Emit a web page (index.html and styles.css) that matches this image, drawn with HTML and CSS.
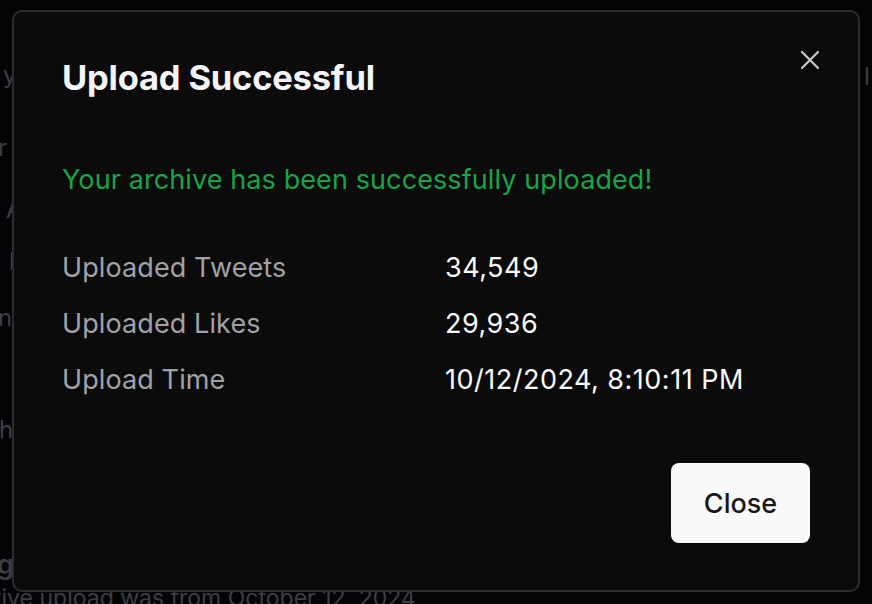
FILE: index.html
```html
<!DOCTYPE html>
<html lang="en">
<head>
<meta charset="utf-8">
<title>Upload Successful</title>
<link rel="stylesheet" href="styles.css">
</head>
<body>
<div class="page">
  <p class="bg-line l1">your archive is ready</p>
  <p class="bg-line l2">r data is stored safely</p>
  <p class="bg-line l3">Archive details</p>
  <p class="bg-line l4">l tweets and likes</p>
  <p class="bg-line l5">nd more information</p>
  <p class="bg-line l6">hosted by the community</p>
  <p class="bg-line l7 strong">g upload history</p>
  <p class="bg-line l8">tive upload was from October 12, 2024</p>
  <span class="bg-right">l</span>
</div>

<div class="overlay">
  <div class="dialog" role="dialog" aria-labelledby="dlg-title">
    <button class="dialog-x" aria-label="Close">
      <svg width="20" height="20" viewBox="0 0 20 20" fill="none" stroke="currentColor" stroke-width="2.2" stroke-linecap="round"><path d="M2 2 L18 18 M18 2 L2 18"/></svg>
    </button>
    <h2 id="dlg-title" class="dialog-title">Upload Successful</h2>
    <p class="dialog-success">Your archive has been successfully uploaded!</p>
    <dl class="stats">
      <dt>Uploaded Tweets</dt><dd>34,549</dd>
      <dt>Uploaded Likes</dt><dd>29,936</dd>
      <dt>Upload Time</dt><dd>10/12/2024, 8:10:11 PM</dd>
    </dl>
    <div class="dialog-footer">
      <button class="btn-close">Close</button>
    </div>
  </div>
</div>
</body>
</html>
```

FILE: styles.css
```css
* { box-sizing: border-box; }
html, body { margin: 0; padding: 0; }
body {
  width: 872px;
  height: 604px;
  overflow: hidden;
  background: #040407;
  font-family: Inter, "Noto Sans", sans-serif;
  position: relative;
}
.page {
  padding-top: 60px;
  display: flex;
  flex-direction: column;
}
.bg-line {
  margin: 0;
  font-size: 24px;
  line-height: 30px;
  color: #3e3e44;
  white-space: nowrap;
}
.l1 { margin-left: 3px; }
.l2 { margin-top: 43px; margin-left: -2px; }
.l3 { margin-top: 32px; margin-left: 6px; }
.l4 { margin-top: 22px; margin-left: 9px; }
.l5 { margin-top: 26px; margin-left: -2px; }
.l6 { margin-top: 82px; margin-left: -1px; }
.l7 { margin-top: 105px; margin-left: -3px; font-size: 27px; }
.l8 { margin-top: 3px; margin-left: -6px; font-size: 23px; }
.strong { font-weight: 600; }
.bg-right {
  position: absolute;
  left: 864px;
  top: 62px;
  font-size: 24px;
  color: #3e3e44;
}
.overlay {
  position: absolute;
  inset: 0;
  padding: 10px 12px 12px 12px;
}
.dialog {
  position: relative;
  width: 848px;
  height: 582px;
  background: #0b0b0b;
  border: 2px solid #2b2b30;
  border-radius: 10px;
  padding: 42px 48px 47px 48px;
  display: flex;
  flex-direction: column;
  color: #fafafa;
}
.dialog-x {
  position: absolute;
  top: 38px;
  right: 38px;
  width: 20px;
  height: 20px;
  padding: 0;
  background: none;
  border: 0;
  color: #c9c9cc;
  display: flex;
}
.dialog-title {
  margin: 0;
  font-size: 34.5px;
  font-weight: 700;
  line-height: 48px;
  letter-spacing: -0.2px;
  color: #f4f4f6;
}
.dialog-success {
  margin: 60px 0 0 0;
  font-size: 27px;
  line-height: 36px;
  letter-spacing: 0.1px;
  color: #17a548;
}
.stats {
  margin: 52px 0 0 0;
  display: grid;
  grid-template-columns: 383px 1fr;
  row-gap: 20px;
  font-size: 27px;
  line-height: 36px;
  letter-spacing: 0.1px;
}
.stats dt { color: #a1a1a8; }
.stats dd { margin: 0; color: #fafafa; letter-spacing: 0.5px; }
.dialog-footer {
  margin-top: auto;
  display: flex;
  justify-content: flex-end;
}
.btn-close {
  width: 139px;
  height: 80px;
  border: 0;
  border-radius: 8px;
  background: #fafafa;
  color: #18181b;
  font-family: inherit;
  font-size: 27px;
  font-weight: 500;
}
```
